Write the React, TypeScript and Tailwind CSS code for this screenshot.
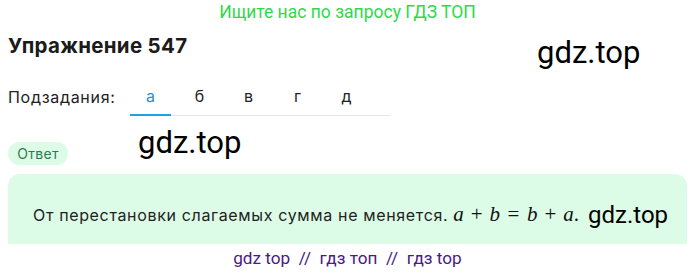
import React from "react";

export default function App() {
  const tabs = ["а", "б", "в", "г", "д"];
  return (
    <div className="relative w-[695px] h-[272px] bg-white overflow-hidden" style={{ fontFamily: "Inter, 'Noto Sans', sans-serif" }}>
      <div className="h-[24px] pt-[1px] text-center text-[17.5px] leading-[22px] text-[#2fd94a]" style={{ fontFamily: "Roboto, sans-serif" }}>
        Ищите нас по запросу ГДЗ ТОП
      </div>
      <div className="relative h-[52px] px-2 pt-[9px]">
        <h1 className="text-[20.5px] leading-[26px] font-bold text-[#1b1b1b] tracking-[0.3px]">Упражнение 547</h1>
        <span className="absolute left-[537px] top-[11px] text-[31px] leading-[36px] text-black" style={{ fontFamily: "Roboto, sans-serif" }}>gdz.top</span>
      </div>
      <div className="flex items-stretch h-[40px] px-2">
        <div className="flex items-end pb-[9px] text-[16px] leading-[20px] tracking-[0.7px] text-[#222] w-[122px]">Подзадания:</div>
        <div className="flex border-b border-[#e6e6e6] w-[260px]">
          {tabs.map((t, i) => (
            <div
              key={t}
              className={
                i === 0
                  ? "w-[41px] mr-[8px] flex items-end justify-center pb-[8px] text-[16px] leading-[20px] text-[#2c8fc4] border-b-2 border-[#1ea1e3] -mb-px"
                  : "w-[41px] mr-[8px] flex items-end justify-center pb-[9px] text-[16px] leading-[20px] text-[#222]"
              }
            >
              {t}
            </div>
          ))}
        </div>
      </div>
      <div className="relative h-[58px] px-2 pt-[26px]">
        <div className="flex items-center justify-center w-[60px] h-[23px] rounded-full bg-[#dcfce7] text-[14px] tracking-[0.3px] text-[#2f7a4d]">Ответ</div>
        <span className="absolute left-[138px] top-[9px] text-[31px] leading-[36px] text-black" style={{ fontFamily: "Roboto, sans-serif" }}>gdz.top</span>
      </div>
      <div className="mx-2 h-[70px] rounded-t-[12px] bg-[#dcfce7] flex items-center pl-[25px] pt-[12px]">
        <span className="text-[16px] tracking-[0.65px] text-[#222]">От перестановки слагаемых сумма не меняется.</span>
        <span className="ml-[5px] text-[21px] text-[#111] whitespace-nowrap" style={{ fontFamily: "'Liberation Serif', serif" }}>
          <i>a</i><span className="mx-[7px]">+</span><i>b</i><span className="mx-[7.5px]">=</span><i>b</i><span className="mx-[7px]">+</span><i>a</i>.
        </span>
        <span className="ml-[9px] text-[24px] text-black" style={{ fontFamily: "Roboto, sans-serif" }}>gdz.top</span>
      </div>
      <div className="pt-[2px] text-center text-[17.2px] leading-[24px] text-[#4a1a86]" style={{ fontFamily: "Roboto, sans-serif" }}>
        gdz top &nbsp;//&nbsp; гдз топ &nbsp;//&nbsp; гдз top
      </div>
    </div>
  );
}
